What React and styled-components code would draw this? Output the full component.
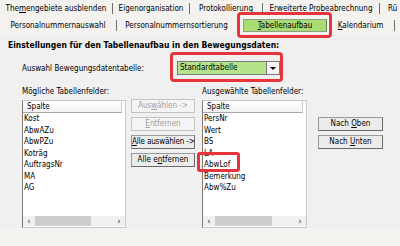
import React from "react";
import styled, { createGlobalStyle } from "styled-components";

const GlobalStyle = createGlobalStyle`
  html, body {
    margin: 0;
    padding: 0;
    background: #f3f2ee;
  }
  body {
    font-family: "DejaVu Sans Condensed", "DejaVu Sans", "Liberation Sans", sans-serif;
    font-stretch: condensed;
    font-size: 8px;
    color: #000;
  }
`;

const Page = styled.div`
  width: 400px;
  height: 246px;
  overflow: hidden;
`;

const TabStrip = styled.div`
  display: flex;
  flex-direction: column;
`;

const TabRow = styled.div`
  display: flex;
  height: ${(p) => p.h}px;
  align-items: center;
  white-space: nowrap;
`;

const Tab = styled.div`
  flex: 0 0 ${(p) => p.w}px;
  height: 11px;
  line-height: 11px;
  text-align: center;
  border-right: 1px solid ${(p) => (p.open ? "transparent" : "#6f6f6f")};
  box-sizing: border-box;
  overflow: hidden;
  ${(p) => p.last && "border-right: none; text-align: left; padding-left: 8px;"}
`;

const ActiveWrap = styled.div`
  flex: 0 0 ${(p) => p.w}px;
  position: relative;
  margin-left: 6px;

  &::after {
    content: "";
    position: absolute;
    left: -6px;
    right: -5px;
    top: -7px;
    bottom: -6px;
    border: 3px solid #e5343b;
    border-radius: 4px;
  }
`;

const ActiveTab = styled.div`
  height: 13px;
  line-height: 12px;
  text-align: center;
  background: #a9dc72;
  border: 1px solid #8f9f80;
  border-right-color: #6e7c62;
  box-sizing: border-box;
`;

const Key = styled.span`
  text-decoration: underline;
`;

const Body = styled.div`
  background: #f0f0f0;
  height: 193px;
  padding: 4px 0 0 8px;
  box-sizing: border-box;
`;

const Heading = styled.div`
  font-weight: bold;
  font-size: 8.5px;
  height: 12px;
  line-height: 12px;
  white-space: nowrap;
`;

const ComboRow = styled.div`
  display: flex;
  align-items: center;
  margin: 10px 0 0 14px;
  height: 14px;
`;

const Label = styled.div`
  width: 155px;
  white-space: nowrap;
`;

const ComboWrap = styled.div`
  position: relative;
  display: flex;
  width: 103px;
  height: 14px;

  &::after {
    content: "";
    position: absolute;
    left: -7px;
    right: -3px;
    top: -9px;
    bottom: -7px;
    border: 3px solid #e5343b;
    border-radius: 4px;
  }
`;

const ComboField = styled.div`
  flex: 1;
  background: #b5e38a;
  border: 1px solid #7a7a7a;
  border-right: none;
  padding-left: 2px;
  line-height: 12px;
`;

const ComboButton = styled.div`
  width: 12px;
  background: #f4f4f4;
  border: 1px solid #7a7a7a;
  display: flex;
  align-items: center;
  justify-content: center;

  &::before {
    content: "";
    border-left: 3px solid transparent;
    border-right: 3px solid transparent;
    border-top: 3px solid #000;
  }
`;

const Columns = styled.div`
  display: flex;
  margin: 11px 0 0 14px;
`;

const Column = styled.div`
  display: flex;
  flex-direction: column;
`;

const Caption = styled.div`
  height: 12px;
  line-height: 12px;
  margin-bottom: 2px;
  white-space: nowrap;
`;

const ListBox = styled.div`
  width: ${(p) => p.w}px;
  height: 128px;
  background: #fff;
  border: 1px solid #c8c8c8;
  border-left-color: #7a7a7a;
  box-sizing: border-box;
  display: flex;
  flex-direction: column;
`;

const ListHeader = styled.div`
  height: 11px;
  line-height: 11px;
  padding-left: 4px;
  border-bottom: 1px solid #a8a8a8;
  border-right: 1px solid #d0d0d0;
  background: linear-gradient(#ffffff, #f2f2f2);
  margin-right: 3px;
`;

const Items = styled.div`
  flex: 1;
`;

const Item = styled.div`
  height: 11.5px;
  line-height: 11.5px;
  padding-left: 1px;
  position: relative;
  ${(p) =>
    p.marked &&
    `
    &::after {
      content: "";
      position: absolute;
      left: -6px;
      width: 37px;
      top: -7px;
      bottom: -1px;
      border: 3px solid #e5343b;
      border-radius: 3px;
    }
  `}
`;

const ScrollBar = styled.div`
  height: 10px;
  margin-bottom: 1px;
  display: flex;
  align-items: center;
  background: #f0f0f0;
  color: #606060;
`;

const Arrow = styled.div`
  width: 12px;
  text-align: center;
  font-size: 9px;
  line-height: 10px;
  font-weight: bold;
`;

const Thumb = styled.div`
  width: ${(p) => p.w}px;
  height: 10px;
  background: #cdcdcd;
`;

const Track = styled.div`
  flex: 1;
`;

const ButtonStack = styled.div`
  display: flex;
  flex-direction: column;
  gap: 4px;
  margin: 13px 7px 0 5px;
  width: 64px;
`;

const Button = styled.div`
  height: 14px;
  line-height: 12px;
  text-align: center;
  border: 1px solid ${(p) => (p.disabled ? "#c4c4c4" : "#9a9a9a")};
  border-right-color: ${(p) => (p.disabled ? "#c4c4c4" : "#6a6a6a")};
  border-bottom-color: ${(p) => (p.disabled ? "#c4c4c4" : "#6a6a6a")};
  background: ${(p) => (p.disabled ? "#f4f4f4" : "#ececec")};
  color: ${(p) => (p.disabled ? "#a0a0a0" : "#000")};
  box-sizing: border-box;
  white-space: nowrap;
  overflow: hidden;
  letter-spacing: ${(p) => (p.tight ? "-0.15px" : "0")};
`;

const SideButtons = styled.div`
  display: flex;
  flex-direction: column;
  gap: 4px;
  margin: 31px 0 0 11px;
  width: 65px;
`;

const List = ({ items, marked, w, thumb }) => (
  <ListBox w={w}>
    <ListHeader>Spalte</ListHeader>
    <Items>
      {items.map((t) => (
        <Item key={t} marked={t === marked}>
          {t}
        </Item>
      ))}
    </Items>
    <ScrollBar>
      <Arrow>&lsaquo;</Arrow>
      <Thumb w={thumb} />
      <Track />
      <Arrow>&rsaquo;</Arrow>
    </ScrollBar>
  </ListBox>
);

export default function App() {
  return (
    <Page>
      <GlobalStyle />
      <TabStrip>
        <TabRow h={16}>
          <Tab w={113}>
            The<Key>m</Key>engebiete ausblenden
          </Tab>
          <Tab w={77}>Eigenorganisation</Tab>
          <Tab w={73}>Protokollierung</Tab>
          <Tab w={117}>Erweiterte Probeabrechnung</Tab>
          <Tab w={20} last>
            Rü
          </Tab>
        </TabRow>
        <TabRow h={19}>
          <Tab w={117}>Personalnummernauswahl</Tab>
          <Tab w={120} open>
            Personalnummernsortierung
          </Tab>
          <ActiveWrap w={84}>
            <ActiveTab>
              <Key>T</Key>abellenaufbau
            </ActiveTab>
          </ActiveWrap>
          <Tab w={68}>
            <Key>K</Key>alendarium
          </Tab>
          <Tab w={5} last />
        </TabRow>
      </TabStrip>
      <Body>
        <Heading>Einstellungen für den Tabellenaufbau in den Bewegungsdaten:</Heading>
        <ComboRow>
          <Label>Auswahl Bewegungsdatentabelle:</Label>
          <ComboWrap>
            <ComboField>Standardtabelle</ComboField>
            <ComboButton />
          </ComboWrap>
        </ComboRow>
        <Columns>
          <Column>
            <Caption>Mögliche Tabellenfelder:</Caption>
            <List
              w={104}
              thumb={56}
              items={["Kost", "AbwAZu", "AbwPZu", "Koträg", "AuftragsNr", "MA", "AG"]}
            />
          </Column>
          <ButtonStack>
            <Button disabled>
              Aus<Key>w</Key>ählen -&gt;
            </Button>
            <Button disabled>
              <Key>E</Key>ntfernen
            </Button>
            <Button tight>
              <Key>A</Key>lle auswählen -&gt;
            </Button>
            <Button>
              Alle e<Key>n</Key>tfernen
            </Button>
          </ButtonStack>
          <Column>
            <Caption>Ausgewählte Tabellenfelder:</Caption>
            <List
              w={105}
              thumb={57}
              items={["PersNr", "Wert", "BS", "LA", "AbwLof", "Bemerkung", "Abw%Zu"]}
              marked="AbwLof"
            />
          </Column>
          <SideButtons>
            <Button>
              Nach <Key>O</Key>ben
            </Button>
            <Button>
              Nach <Key>U</Key>nten
            </Button>
          </SideButtons>
        </Columns>
      </Body>
    </Page>
  );
}
